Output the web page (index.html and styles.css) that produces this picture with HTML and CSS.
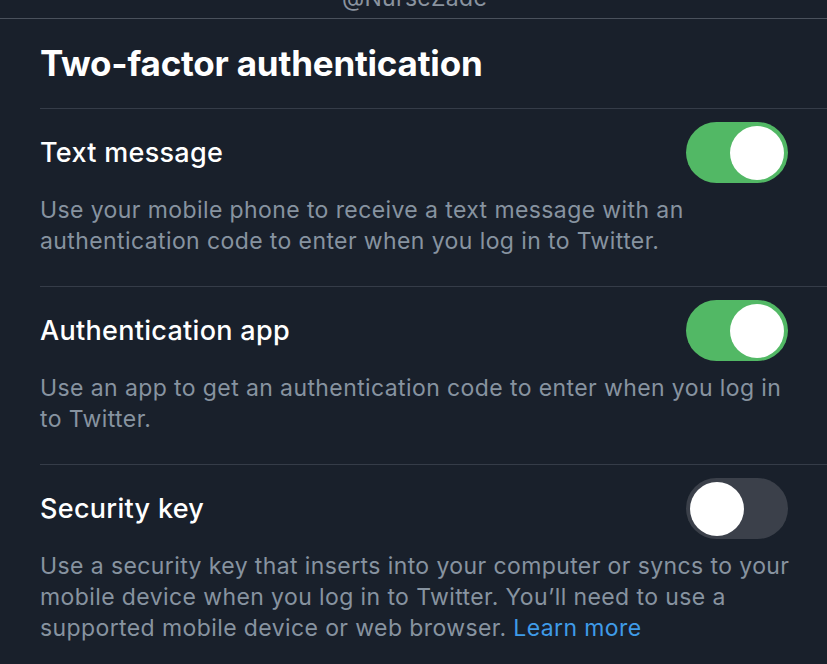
FILE: index.html
```html
<!DOCTYPE html>
<html>
<head>
<meta charset="utf-8">
<link rel="stylesheet" href="styles.css">
</head>
<body>
<div class="topbar"><span class="handle">@NurseZade</span></div>
<main class="content">
  <h1 class="title">Two-factor authentication</h1>
  <section class="option">
    <div class="option-head">
      <h2 class="option-name">Text message</h2>
      <span class="toggle on"><span class="knob"></span></span>
    </div>
    <p class="option-desc">Use your mobile phone to receive a text message with an authentication code to enter when you log in to Twitter.</p>
  </section>
  <section class="option">
    <div class="option-head">
      <h2 class="option-name">Authentication app</h2>
      <span class="toggle on"><span class="knob"></span></span>
    </div>
    <p class="option-desc">Use an app to get an authentication code to enter when you log in to Twitter.</p>
  </section>
  <section class="option last">
    <div class="option-head">
      <h2 class="option-name">Security key</h2>
      <span class="toggle"><span class="knob"></span></span>
    </div>
    <p class="option-desc">Use a security key that inserts into your computer or syncs to your mobile device when you log in to Twitter. You’ll need to use a supported mobile device or web browser. <a class="link" href="#">Learn more</a></p>
  </section>
</main>
</body>
</html>
```

FILE: styles.css
```css
html, body {
  margin: 0;
  padding: 0;
  background: #19202b;
  height: 100%;
  overflow: hidden;
}
body {
  font-family: Inter, "Noto Sans", sans-serif;
  color: #ffffff;
}
.topbar {
  height: 18px;
  border-bottom: 1px solid #4a515c;
  overflow: hidden;
  display: flex;
  justify-content: center;
  align-items: flex-end;
}
.handle {
  font-size: 23px;
  line-height: 23px;
  color: #8a939f;
  margin-bottom: 8px;
  padding-left: 2px;
  letter-spacing: 0.3px;
}
.content {
  padding-left: 40px;
}
.title {
  margin: 0;
  font-size: 35px;
  font-weight: 700;
  letter-spacing: -0.2px;
  height: 89px;
  line-height: 89px;
  border-bottom: 1px solid #353c48;
}
.option {
  border-bottom: 1px solid #353c48;
  padding: 13px 0 29px 0;
}
.option.last {
  border-bottom: none;
}
.option-head {
  display: flex;
  justify-content: space-between;
  align-items: center;
  margin-right: 39px;
}
.option-name {
  margin: 0;
  font-size: 27px;
  font-weight: 500;
  letter-spacing: 0.3px;
}
.toggle {
  width: 102px;
  height: 61px;
  border-radius: 31px;
  background: #3b404a;
  display: flex;
  align-items: center;
  padding: 0 4px;
  box-sizing: border-box;
}
.toggle.on {
  background: #52b865;
  justify-content: flex-end;
}
.knob {
  width: 54px;
  height: 54px;
  border-radius: 50%;
  background: #ffffff;
}
.option-desc {
  margin: 12px 25px 0 0;
  font-size: 23px;
  line-height: 31px;
  color: #8793a0;
  letter-spacing: 0.4px;
}
.link {
  color: #3f9be8;
  text-decoration: none;
}
```
